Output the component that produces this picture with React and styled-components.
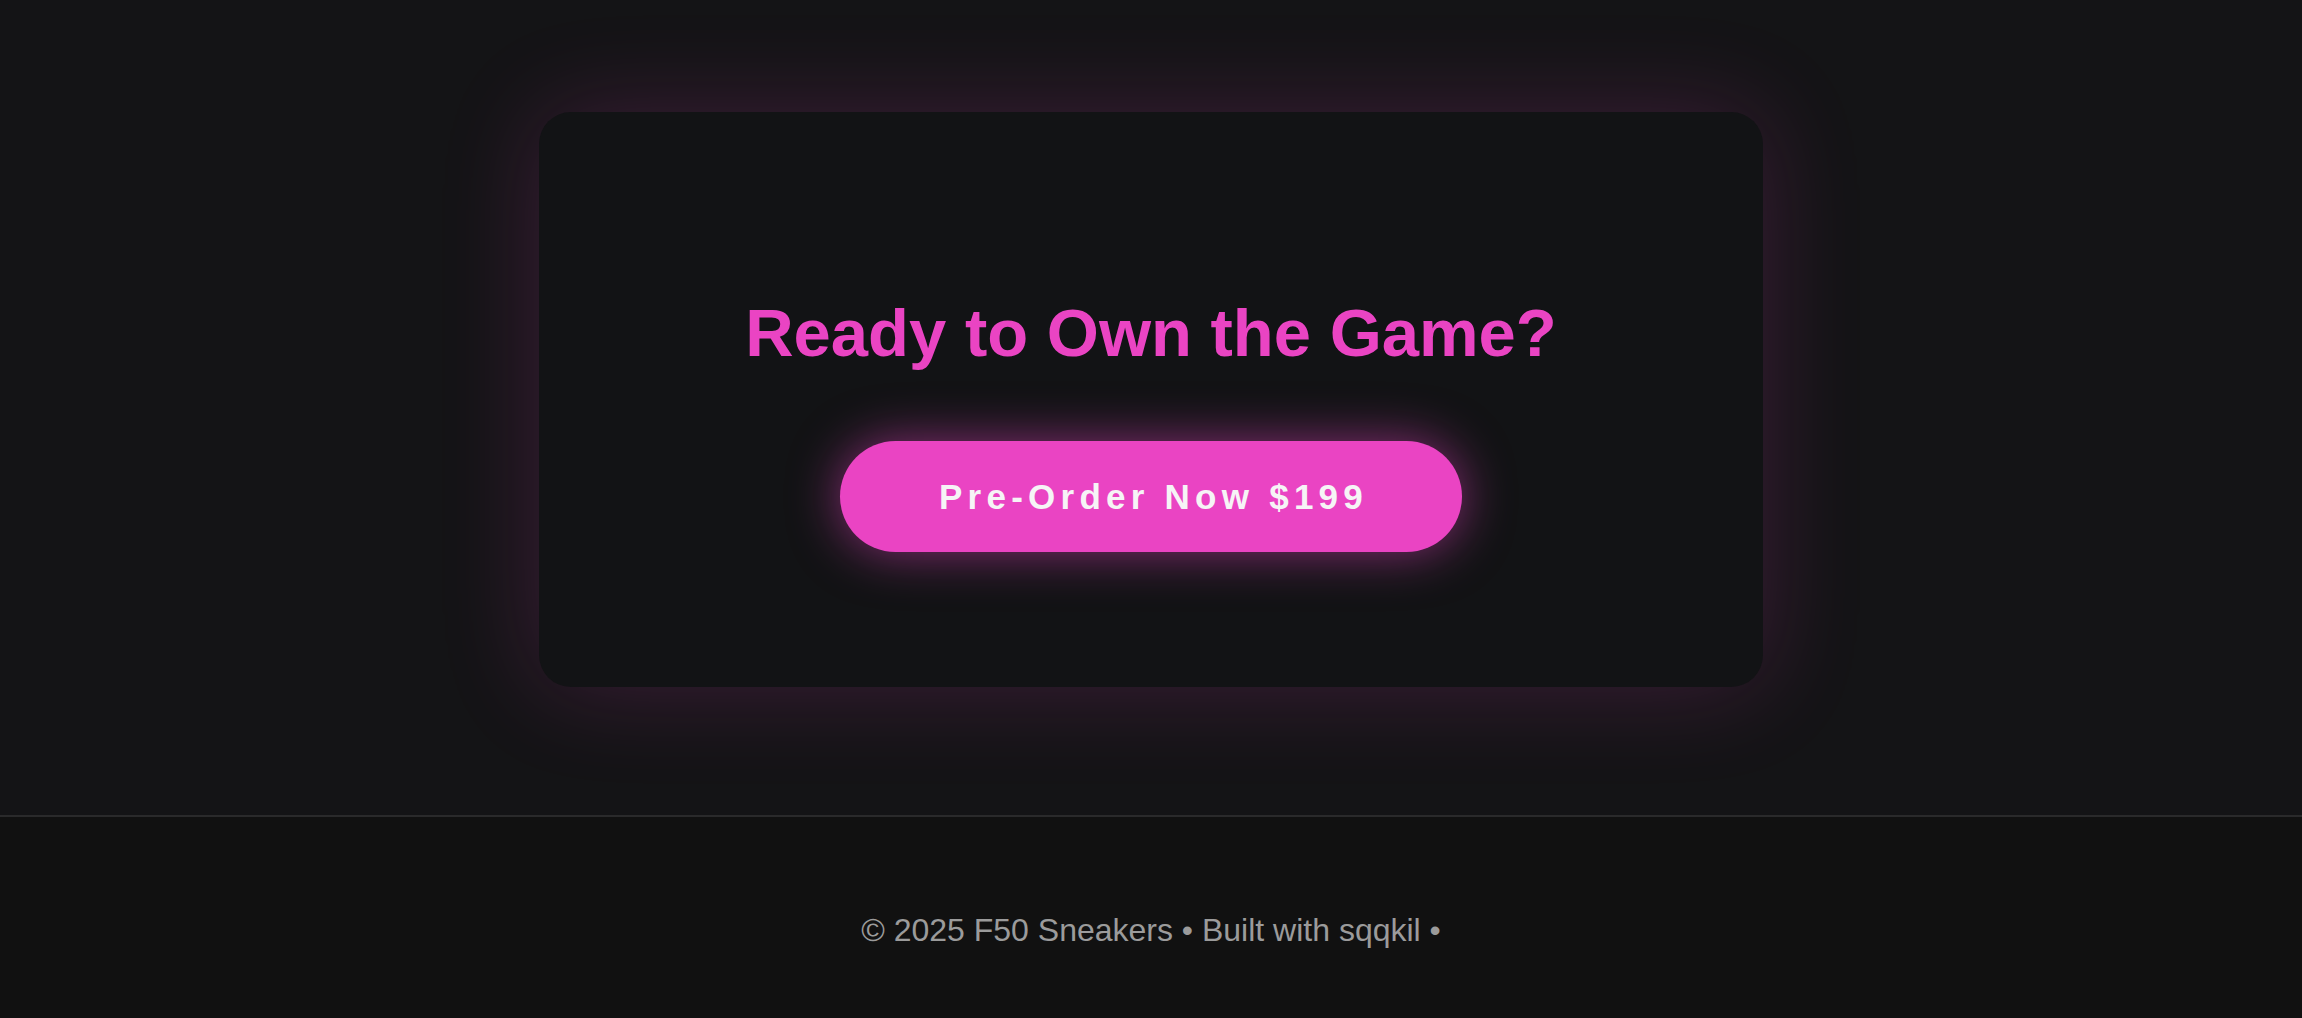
import React from "react";
import styled, { createGlobalStyle } from "styled-components";

const Global = createGlobalStyle`
  html, body { margin: 0; padding: 0; background: #111111; }
  body { font-family: "Liberation Sans", Arial, Helvetica, sans-serif; }
  * { box-sizing: border-box; }
`;

const Page = styled.div`
  display: flex;
  flex-direction: column;
  min-height: 100vh;
`;

const CtaSection = styled.section`
  background: #141416;
  display: flex;
  justify-content: center;
  padding: 112px 0 128px;
  border-bottom: 2px solid #2a2a2b;
`;

const Card = styled.div`
  width: 1224px;
  height: 575px;
  background: #121315;
  border-radius: 32px;
  box-shadow: 0 0 100px rgba(233, 68, 196, 0.19);
  display: flex;
  flex-direction: column;
  align-items: center;
  padding-top: 182px;
`;

const Heading = styled.h2`
  margin: 0 0 70px;
  font-size: 67px;
  font-weight: 700;
  line-height: 1.15;
  color: #ea44c3;
`;

const CtaButton = styled.button`
  border: none;
  cursor: pointer;
  background: #ea44c3;
  color: #f6f4f6;
  font-family: inherit;
  font-weight: 700;
  font-size: 35px;
  letter-spacing: 0.15em;
  line-height: 41px;
  height: 111px;
  width: 622px;
  padding: 0 0 0 5px;
  border-radius: 999px;
  box-shadow: 0 0 50px rgba(233, 68, 196, 0.55);
`;

const Footer = styled.footer`
  background: #111111;
  padding: 95px 0 69px;
  text-align: center;
`;

const FooterText = styled.p`
  margin: 0;
  font-size: 32px;
  line-height: 37px;
  color: #9b9b9b;
`;

export default function App() {
  return (
    <Page>
      <Global />
      <CtaSection>
        <Card>
          <Heading>Ready to Own the Game?</Heading>
          <CtaButton>Pre-Order Now $199</CtaButton>
        </Card>
      </CtaSection>
      <Footer>
        <FooterText>© 2025 F50 Sneakers • Built with sqqkil •</FooterText>
      </Footer>
    </Page>
  );
}
